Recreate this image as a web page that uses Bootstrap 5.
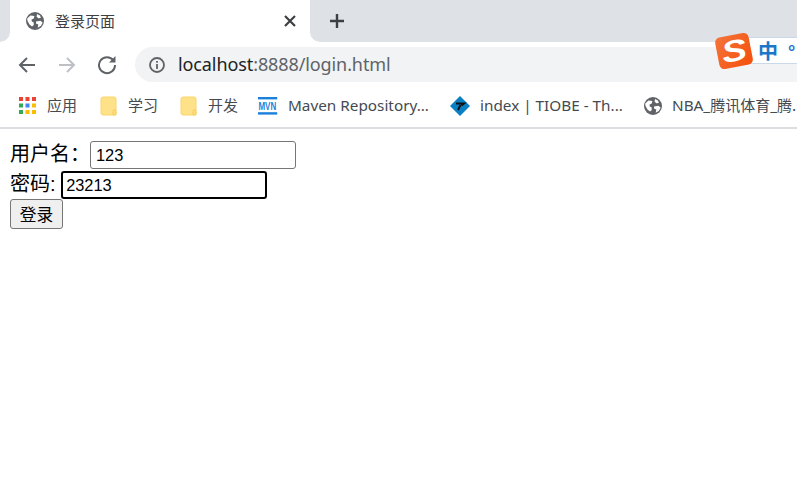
<!DOCTYPE html>
<html lang="zh">
<head>
<meta charset="utf-8">
<title>登录页面</title>
<link href="https://cdn.jsdelivr.net/npm/bootstrap@5.3.0/dist/css/bootstrap.min.css" rel="stylesheet">
<style>
html,body{background:#fff;overflow:hidden}
body{width:797px;height:490px;font-family:"Noto Sans","Noto Sans CJK SC",sans-serif;color:#000}
.chrome-ui{position:relative}
.tabstrip{height:42px;background:#fff}
.strip-left{width:10px;background:#dee1e6;border-bottom-right-radius:10px}
.strip-right{background:#dee1e6;border-bottom-left-radius:10px}
.tabcell{width:300px;border-radius:10px 10px 0 0;padding:0 13px 0 16px;font-family:"Noto Sans CJK SC",sans-serif;font-size:15px;color:#3c4043}
.tabcell .tab-name{margin-left:3px}
.newtab{width:54px}
.toolbar{height:46px;padding:0 0 1px 17px}
.navbtn{width:40px}
.addr{height:35px;margin-left:-2px;padding-left:14px;background:#f1f3f4;border-radius:18px 0 0 18px;font-size:18px;color:#5f6368;letter-spacing:-.1px}
.addr b{font-weight:400;color:#202124}
.addr-info{margin-right:13px}
.bookbar{height:41px;padding:0 0 4px 19px;border-bottom:2px solid #dcdde1;font-size:15.3px;color:#444a50;white-space:nowrap}
.bk{gap:10px}
.bk-apps{width:81px}
.bk-study{width:80px}
.bk-dev{width:78px}
.bk-mvn{width:192px}
.bk-tiobe{width:194px}
.zh{font-family:"Noto Sans CJK SC",sans-serif;font-size:15px}
.ime{position:absolute;left:716px;top:33px;width:81px;height:36px}
.ime-box{position:absolute;left:24px;top:4px;width:60px;height:27px;background:#fff;border:1px solid #c9d9ea;border-right:0;color:#1c76c8;font:700 20px/25px "Noto Sans CJK SC",sans-serif;padding-left:17px;white-space:nowrap}
.ime-gap{margin-left:10px;font-size:18px}
.ime-logo{position:absolute;left:1px;top:2px;width:34px;height:32px;border-radius:5px;background:linear-gradient(135deg,#f4743a,#f44f0c);transform:rotate(-11deg);color:#fff;font:italic 700 30px/31px "Liberation Sans",sans-serif;text-align:center}
.ime-s{display:inline-block;transform:scaleX(1.25)}
.loginbox{padding:12px 10px 0;font-family:"Liberation Sans","Noto Sans CJK SC",sans-serif;font-size:20px;line-height:27px}
.formrow{height:30px}
.formrow.second{height:28px}
.loginbox input{width:206px;height:28px;padding:0 5px;font:16.4px "Liberation Sans",sans-serif;color:#000;border:1px solid #767676;border-radius:3px;outline:0;vertical-align:top;margin-top:0}
.loginbox input.focused{border:2px solid #000;padding:0 3px}
.loginbtn{width:53px;height:30px;padding:0;font-size:16.7px;line-height:26px;background:#efefef;border:1px solid #767676;border-radius:3px;color:#000;display:block;font-family:"Noto Sans CJK SC",sans-serif}
</style>
</head>
<body>
<div class="chrome-ui">
  <div class="tabstrip d-flex">
    <div class="strip-left"></div>
    <div class="tabcell bg-white d-flex align-items-center">
      <svg width="18" height="18" viewBox="0 0 18 18" class="me-2 flex-shrink-0"><circle cx="9" cy="9" r="9" fill="#5f6368"/><path d="M1.2 6.5 4.5 3.6 8.4 4 7.8 6.4 5.6 7.6 5.7 9.6 7.6 10.2 7.8 13 6 14.5 3.5 12.5 1.5 9ZM10 9.6l4.5-.9 2.2 2-2 3.4-3 1.6.6-3.2L10 11.4Z" fill="#fff"/><path d="M11 2l3 1.6.8 2.4-2.6.3-1.5-1.8Z" fill="#fff"/></svg>
      <span class="flex-grow-1 tab-name">登录页面</span>
      <svg width="14" height="14" viewBox="0 0 14 14"><path d="M2 2 12 12M12 2 2 12" stroke="#3c4043" stroke-width="2.2"/></svg>
    </div>
    <div class="strip-right flex-grow-1 d-flex align-items-center">
      <div class="newtab d-flex justify-content-center">
        <svg width="16" height="16" viewBox="0 0 16 16"><path d="M8 1V15M1 8H15" stroke="#3c4043" stroke-width="2.4"/></svg>
      </div>
    </div>
  </div>
  <div class="toolbar d-flex align-items-center">
    <div class="navbtn d-flex"><svg width="20" height="20" viewBox="0 0 20 20"><path d="M18 10H3M10 3l-7 7 7 7" fill="none" stroke="#5f6368" stroke-width="2"/></svg></div>
    <div class="navbtn d-flex"><svg width="20" height="20" viewBox="0 0 20 20"><path d="M2 10H17M10 3l7 7-7 7" fill="none" stroke="#bdc1c6" stroke-width="2"/></svg></div>
    <div class="navbtn d-flex"><svg width="20" height="20" viewBox="0 0 20 20"><path d="M16.5 5.5A8 8 0 1 0 18 10" fill="none" stroke="#5f6368" stroke-width="2"/><path d="M18.5 1V7.5H12Z" fill="#5f6368"/></svg></div>
    <div class="addr flex-grow-1 d-flex align-items-center">
      <svg class="addr-info" width="16" height="16" viewBox="0 0 16 16"><circle cx="8" cy="8" r="7" fill="none" stroke="#5f6368" stroke-width="1.8"/><path d="M8 7V12M8 4V5.8" stroke="#5f6368" stroke-width="1.8"/></svg>
      <span><b>localhost</b>:8888/login.html</span>
    </div>
  </div>
  <div class="bookbar d-flex align-items-center">
    <div class="bk bk-apps d-flex align-items-center">
      <svg width="18" height="18" viewBox="0 0 18 18"><g><rect x="0" y="0" width="4" height="4" fill="#ea4335"/><rect x="6.5" y="0" width="4" height="4" fill="#ea4335"/><rect x="13" y="0" width="4" height="4" fill="#ea4335"/><rect x="0" y="6.5" width="4" height="4" fill="#34a853"/><rect x="6.5" y="6.5" width="4" height="4" fill="#4285f4"/><rect x="13" y="6.5" width="4" height="4" fill="#fbbc05"/><rect x="0" y="13" width="4" height="4" fill="#34a853"/><rect x="6.5" y="13" width="4" height="4" fill="#fbbc05"/><rect x="13" y="13" width="4" height="4" fill="#fbbc05"/></g></svg>
      <span class="zh">应用</span>
    </div>
    <div class="bk bk-study d-flex align-items-center">
      <svg width="18" height="20" viewBox="0 0 18 20"><path d="M3 1H14a2 2 0 0 1 2 2V18a1 1 0 0 1-1 1H3a2 2 0 0 1-2-2V3a2 2 0 0 1 2-2Z" fill="#fee28a" stroke="#fcd667"/><rect x="13" y="14" width="3" height="5" rx="1.5" fill="#fee28a" stroke="#f6c84c"/></svg>
      <span class="zh">学习</span>
    </div>
    <div class="bk bk-dev d-flex align-items-center">
      <svg width="18" height="20" viewBox="0 0 18 20"><path d="M3 1H14a2 2 0 0 1 2 2V18a1 1 0 0 1-1 1H3a2 2 0 0 1-2-2V3a2 2 0 0 1 2-2Z" fill="#fee28a" stroke="#fcd667"/><rect x="13" y="14" width="3" height="5" rx="1.5" fill="#fee28a" stroke="#f6c84c"/></svg>
      <span class="zh">开发</span>
    </div>
    <div class="bk bk-mvn d-flex align-items-center">
      <svg width="20" height="18" viewBox="0 0 25 18" preserveAspectRatio="none"><rect width="24" height="2.4" fill="#1b7fdc"/><rect y="15.2" width="24" height="2.4" fill="#1b7fdc"/><text x="0.5" y="12.6" font-family="Liberation Sans" font-weight="700" font-size="10" fill="#1b7fdc">MVN</text></svg>
      <span>Maven Repository...</span>
    </div>
    <div class="bk bk-tiobe d-flex align-items-center">
      <svg width="20" height="20" viewBox="0 0 20 20"><path d="M10 0 20 10 10 20 0 10Z" fill="#0a7fc4"/><path d="M6 7.5H14L11.5 9.5M10.5 9 8 14" fill="none" stroke="#111" stroke-width="2"/></svg>
      <span>index | TIOBE - Th...</span>
    </div>
    <div class="bk d-flex align-items-center">
      <svg width="18" height="18" viewBox="0 0 18 18"><circle cx="9" cy="9" r="9" fill="#5f6368"/><path d="M1.2 6.5 4.5 3.6 8.4 4 7.8 6.4 5.6 7.6 5.7 9.6 7.6 10.2 7.8 13 6 14.5 3.5 12.5 1.5 9ZM10 9.6l4.5-.9 2.2 2-2 3.4-3 1.6.6-3.2L10 11.4Z" fill="#fff"/><path d="M11 2l3 1.6.8 2.4-2.6.3-1.5-1.8Z" fill="#fff"/></svg>
      <span>NBA_<span class="zh">腾讯体育</span>_<span class="zh">腾.</span></span>
    </div>
  </div>
  <div class="ime">
    <div class="ime-box">中<span class="ime-gap">°</span></div>
    <div class="ime-logo"><span class="ime-s">S</span></div>
  </div>
</div>
<form class="loginbox" onsubmit="return false">
  <div class="formrow">用户名：<input type="text" value="123"></div>
  <div class="formrow second">密码: <input class="focused" type="text" value="23213"></div>
  <button class="loginbtn" type="button">登录</button>
</form>
</body>
</html>
